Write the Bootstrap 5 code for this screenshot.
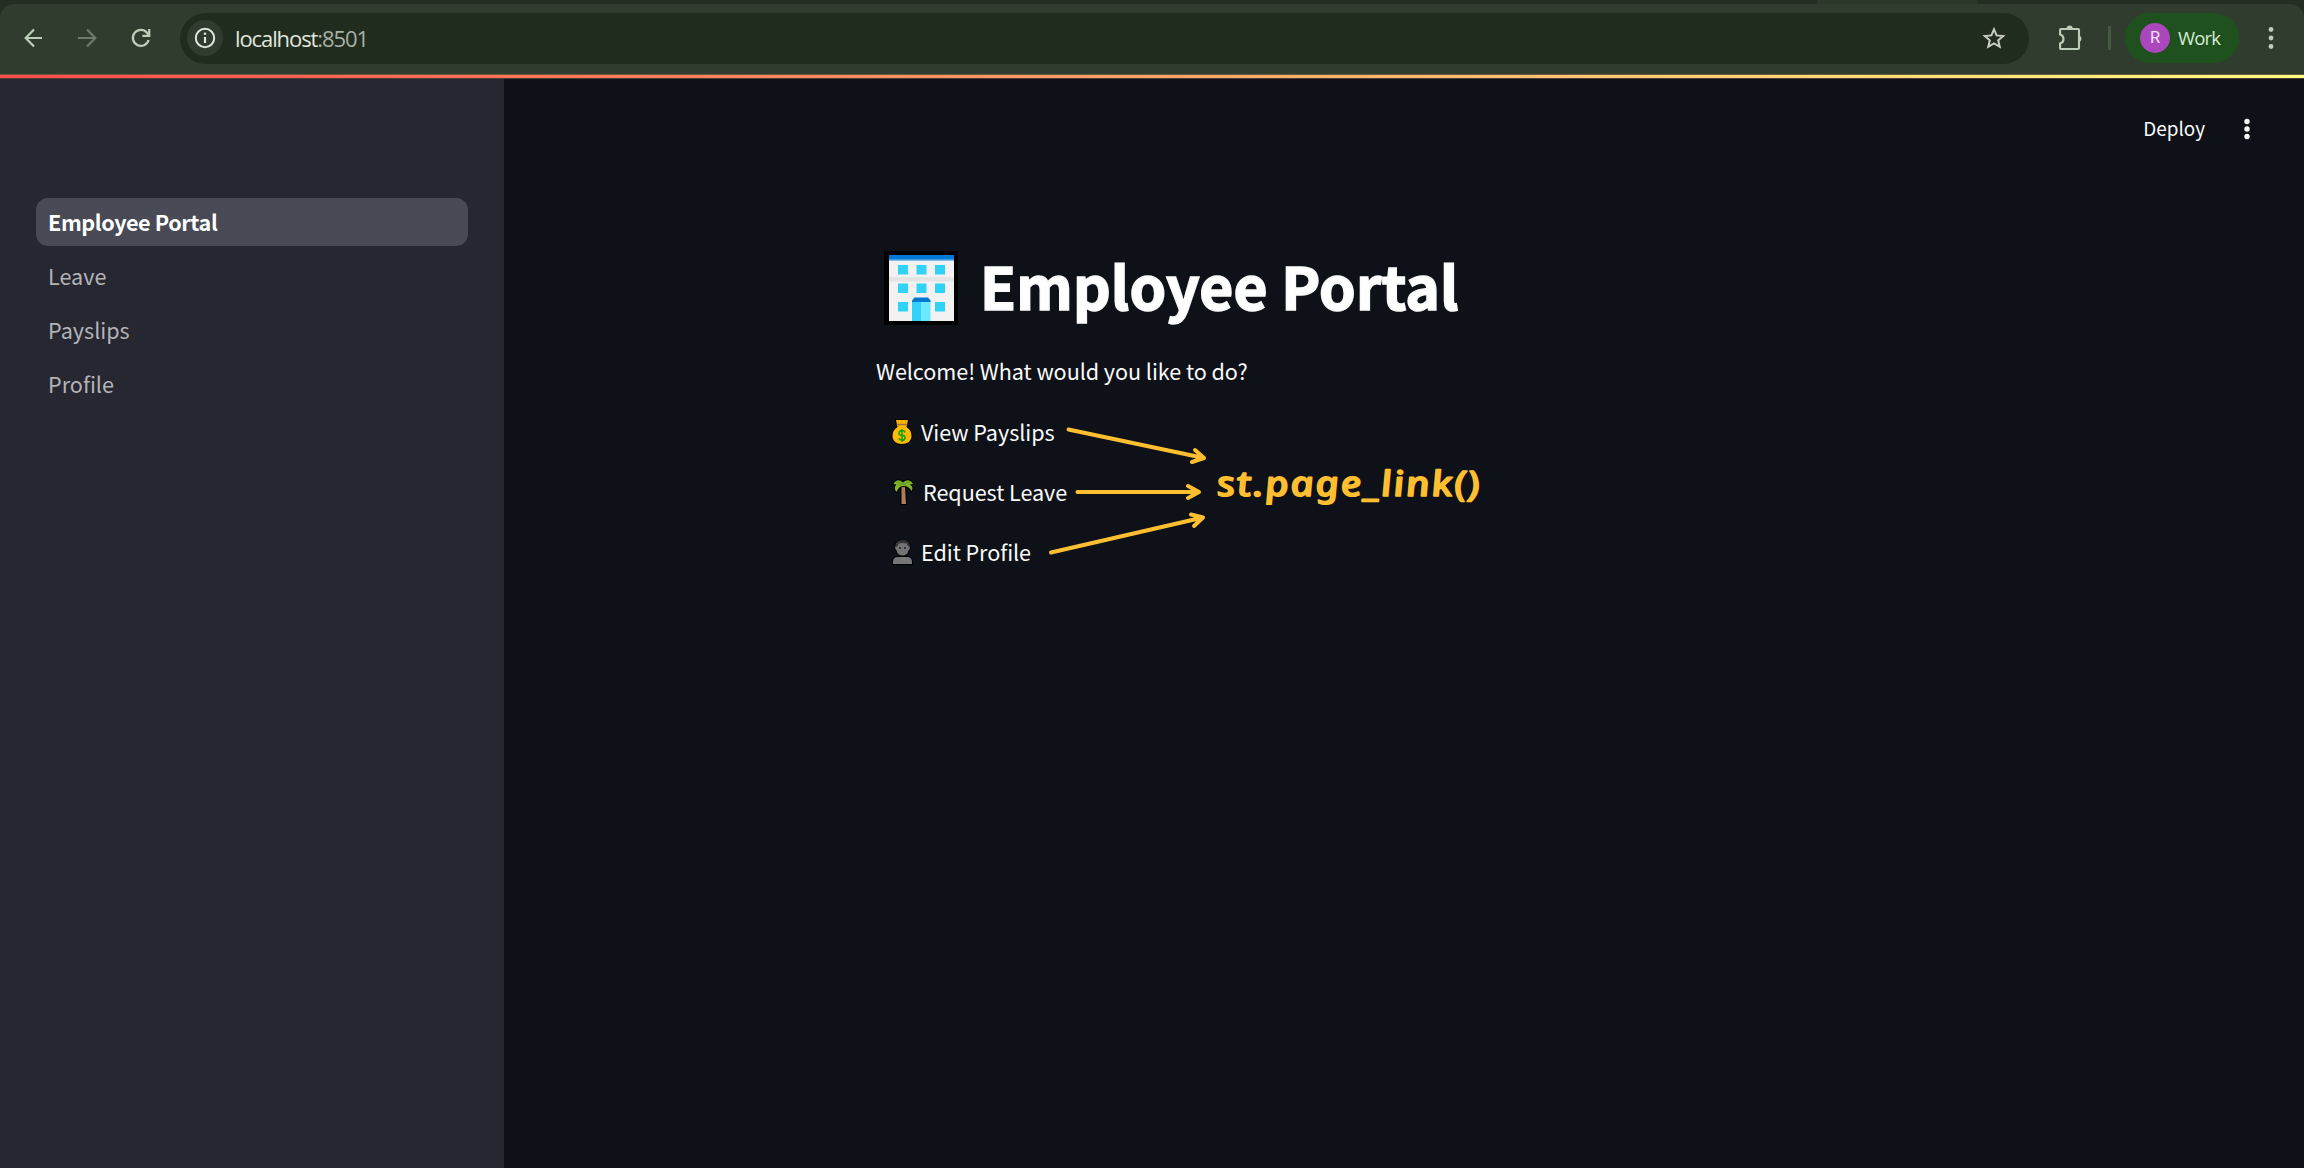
<!DOCTYPE html>
<html lang="en" data-bs-theme="dark">
<head>
<meta charset="utf-8">
<title>Employee Portal</title>
<link rel="stylesheet" href="https://cdn.jsdelivr.net/npm/bootstrap@5.3.0/dist/css/bootstrap.min.css">
<style>
body{background:#0e1117;color:#fafafa;font-family:"Noto Sans CJK SC","Noto Sans",sans-serif;font-size:21.6px;line-height:36px}
svg{display:block;flex:none}
.tabstrip{height:19px;background:#232d22;margin-bottom:-15px;padding-left:1817px}
.tabpiece{width:161px;height:5px;background:#2b3728}
.toolbar{height:70px;background:#303d2e;border-radius:14px 14px 0 0;padding:8px 24px 10px;color:#bccdb8;position:relative}
.omnibox{width:1849px;height:51px;background:#202c1d;border-radius:26px;margin-left:29px;padding:0 23px 0 7px}
.infodot{width:36px;height:36px;background:#303d2e}
.url{font-family:"Open Sans",sans-serif;font-size:22px;color:#e1e5de;margin-left:12px;letter-spacing:-1.1px}
.url span{color:#a9b0a6}
.sep{width:3px;height:24px;background:#465942;margin:0 14px 0 24px}
.profile{width:114px;height:50px;background:#1f511f;padding-left:15px}
.avatar{width:30px;height:30px;background:#ab47bc;color:#f3e3f6;font:16.5px/30px Roboto,sans-serif}
.workname{font:18.5px/24px "Open Sans",sans-serif;color:#d5ebcf;margin-left:8px;margin-top:-1px;letter-spacing:-.8px}
.accentline{height:5px;background:linear-gradient(90deg,#ff4b4b,#fffd80);border-top:1px solid #6c5a40;border-bottom:.5px solid #4b3b36}
.page{height:1089px}
.side{width:504px;background:#262730;padding:119px 36px 0}
.side .nav-link{height:48px;margin-bottom:6px;border-radius:12px;padding:6px 12px;color:#b3b3b7}
.side .nav-link.active{background:#484a55;color:#fff;font-weight:700;letter-spacing:-.4px}
.deploybar{height:100px;padding:0 50px 0 0}
.deploy{font-size:18.9px;line-height:30px;margin-right:35px;margin-top:-2px}
.content{margin-left:372px;width:1056px;padding-top:69px}
.content h1{font-size:58.6px;line-height:80px;font-weight:700;margin:0 0 25px;padding-left:8px;letter-spacing:.2px;-webkit-text-stroke:1.7px #fafafa}
.content h1 svg{margin-right:22px}
.content h1 span{margin-top:-3px;margin-bottom:3px}
.welcome{margin:0 0 25px;letter-spacing:-.06px}
.pagelink{height:36px;margin-bottom:24px;padding-left:15px;color:#fafafa;text-decoration:none;letter-spacing:-.06px}
.annotation{left:1040px;top:410px}
.annotation text{font-family:"Noto Sans","Open Sans",sans-serif;font-style:italic;font-weight:500;font-size:35px;fill:#ffbf31;stroke:#ffbf31;stroke-width:1.4;stroke-linejoin:round}
</style>
<script src="https://cdn.jsdelivr.net/npm/bootstrap@5.3.0/dist/js/bootstrap.bundle.min.js"></script>
</head>
<body class="overflow-hidden">
<header>
  <div class="tabstrip"><div class="tabpiece"></div></div>
  <div class="toolbar d-flex align-items-center">
    <svg width="19" height="20" viewBox="0 0 19 20" fill="none" stroke="#bccdb8" stroke-width="2.2"><path d="M18 10H2M10 1.5 1.7 10l8.3 8.5"/></svg>
    <svg style="margin-left:35px" width="19" height="20" viewBox="0 0 19 20" fill="none" stroke="#6d7b69" stroke-width="2.2"><path d="M0 10h16M9 1.5l8.3 8.5L9 18.5"/></svg>
    <svg style="margin-left:34px" width="20" height="20" viewBox="0 0 20 20" fill="none" stroke="#bccdb8" stroke-width="2.3"><path d="M17.6 12A8 8 0 1 1 16 4.7l2 2.2M18.2 1v6.8h-6.8"/></svg>
    <div class="omnibox d-flex align-items-center">
      <div class="infodot rounded-circle d-flex align-items-center justify-content-center">
        <svg width="22" height="22" viewBox="0 0 22 22"><circle cx="11" cy="11" r="9.2" fill="none" stroke="#dfe5dc" stroke-width="2"/><path d="M11 10v6" stroke="#dfe5dc" stroke-width="2.2"/><circle cx="11" cy="6.8" r="1.3" fill="#dfe5dc"/></svg>
      </div>
      <div class="url">localhost<span>:8501</span></div>
      <svg class="ms-auto" width="24" height="24" viewBox="0 0 24 24" fill="none" stroke="#c9cdc4" stroke-width="2"><path d="m12 3.300 2.600 6.100 6.600.6-5 4.300 1.500 6.500L12 17.400l-5.700 3.400 1.500-6.500-5-4.300 6.600-.6z"/></svg>
    </div>
    <svg style="margin-left:29px" width="26" height="26" viewBox="0 0 26 26" fill="none" stroke="#bccdb8" stroke-width="2.1"><path d="M2.100 5q0-1 1-1H20q1 0 1 1v18q0 1-1 1H3.100q-1 0-1-1v-4.500q3.400-.8 3.400-4.500T2.100 9.500z"/><path d="M8.500 4a3.200 3.600 0 0 1 6.400 0zM21 10.500a3.300 3.300 0 0 1 0 6.400z" fill="#bccdb8" stroke="none"/></svg>
    <div class="sep"></div>
    <div class="profile rounded-pill d-flex align-items-center"><div class="avatar rounded-circle text-center">R</div><div class="workname">Work</div></div>
    <svg style="margin-left:28px" width="8" height="24" viewBox="0 0 8 24" fill="#bccdb8"><circle cx="4" cy="3.500" r="2.400"/><circle cx="4" cy="12" r="2.400"/><circle cx="4" cy="20.500" r="2.400"/></svg>
  </div>
  <div class="accentline"></div>
</header>
<div class="page d-flex">
  <aside class="side flex-shrink-0">
    <nav class="nav flex-column">
      <a class="nav-link active" href="#">Employee Portal</a>
      <a class="nav-link" href="#">Leave</a>
      <a class="nav-link" href="#">Payslips</a>
      <a class="nav-link" href="#">Profile</a>
    </nav>
  </aside>
  <main class="flex-grow-1">
    <div class="deploybar d-flex align-items-center justify-content-end">
      <span class="deploy">Deploy</span>
      <svg width="14" height="24" viewBox="0 0 14 24" fill="#fafafa"><circle cx="7" cy="4.500" r="2.700"/><circle cx="7" cy="12" r="2.700"/><circle cx="7" cy="19.500" r="2.700"/></svg>
    </div>
    <div class="content">
      <h1 class="d-flex align-items-center">
        <svg width="74" height="74" viewBox="0 0 74 74"><path d="M0 0h74v74H0z" fill="#000"/><path d="M5 4h65v66H5z" fill="#f2f2f2"/><path d="M5 4h65v5H5z" fill="#0078d4"/><path d="M5 8.500h65V10H5z" fill="#83bdf0"/><path d="M5 26h65v4.500H5z" fill="#e4e4e4"/><path d="M14 14h10v9.500H14zM32.500 14h10v9.500h-10zM51 14h10v9.500H51zM14 32.500h10V42H14zM32.500 32.500h10V42h-10zM51 32.500h10V42H51zM14 51h10v9.500H14zM51 51h10v9.500H51zM28 50h9.500v20H28z" fill="#31d2f7"/><path d="M37.500 50h9v20h-9z" fill="#6be9ff"/><path d="M28 51v-1.500l2.500-3H44l2.500 3V51z" fill="#0078d4"/></svg>
        <span>Employee Portal</span>
      </h1>
      <p class="welcome">Welcome! What would you like to do?</p>
      <a class="pagelink d-flex align-items-center" href="#">
        <svg style="margin-right:8px" width="22" height="28" viewBox="0 0 22 28"><path d="M5 2l12 0-1.500 7q5 3 5 9c0 5-4 8-9.500 8s-9.500-3-9.500-8q0-6 5-9z" fill="#ffb900" stroke="#000" stroke-width="2" paint-order="stroke"/><path d="M5.500 6.500h11" stroke="#a56a43" stroke-width="1.500"/><path d="M7.500 2v3M11 2v3M14.500 2v3" stroke="#d99a00" stroke-width=".8"/><path d="M14 14.500q-.5-2-3-2t-3 2.300 3 2.500 3 2.700-3 2.300-3-2M11 11v13" fill="none" stroke="#13a10e" stroke-width="1.600"/></svg>View Payslips</a>
      <a class="pagelink d-flex align-items-center" href="#">
        <svg style="margin-right:8px" width="24" height="28" viewBox="0 0 24 28"><path d="M10.500 9h3.500l1 17h-4.500z" fill="#b07c57" stroke="#000" stroke-width="2.500" paint-order="stroke"/><path d="M12 8Q8 8 5.500 14 2 10 5.500 6.500L2.500 6Q6-.5 12 4.500 18-.5 22 6l-3 .5Q23 9 20.500 13 18 8 12 8z" fill="#7fb52a" stroke="#000" stroke-width="2" paint-order="stroke"/><path d="m7 8 5-2 5 2M5 4l7 2 7-2" stroke="#5f9420" stroke-width=".8" fill="none"/></svg>Request Leave</a>
      <a class="pagelink d-flex align-items-center" href="#">
        <svg style="margin-right:7px" width="23" height="28" viewBox="0 0 23 28"><path d="M2 26v-2q0-5 5-5h9q5 0 5 5v2z" fill="#767676" stroke="#000" stroke-width="2" paint-order="stroke"/><path d="M4.500 8.500q0-6 7-6t7 6l.5 2-1.500 2q-1 5-6 5t-6-5l-1.500-2z" fill="#747474" stroke="#000" stroke-width="1.500" paint-order="stroke"/><path d="M5 9V6q2-4 7-4t6.500 5v2q-2-1-3-3.500-4-1-8 0Q7 8 5 9z" fill="#343434"/><circle cx="9" cy="10" r="1" fill="#202020"/><circle cx="14" cy="10" r="1" fill="#202020"/></svg>Edit Profile</a>
    </div>
  </main>
</div>
<svg class="annotation position-absolute" width="460" height="160" viewBox="1040 410 460 160">
  <g fill="none" stroke="#ffbf31" stroke-width="4" stroke-linecap="round" stroke-linejoin="round"><path d="M1068.500 429.500 1204 458M1195 450l9 8-12 4"/><path d="M1077.500 492H1198M1188 486l11 6-11 6"/><path d="M1051 552.500 1203 517.500M1191 514.500l12 3-9 8.500"/></g>
  <g transform="translate(1218.500 496) skewX(9) scale(1.17 1)"><text textLength="225" lengthAdjust="spacing">st.page_link()</text></g>
</svg>
</body>
</html>
